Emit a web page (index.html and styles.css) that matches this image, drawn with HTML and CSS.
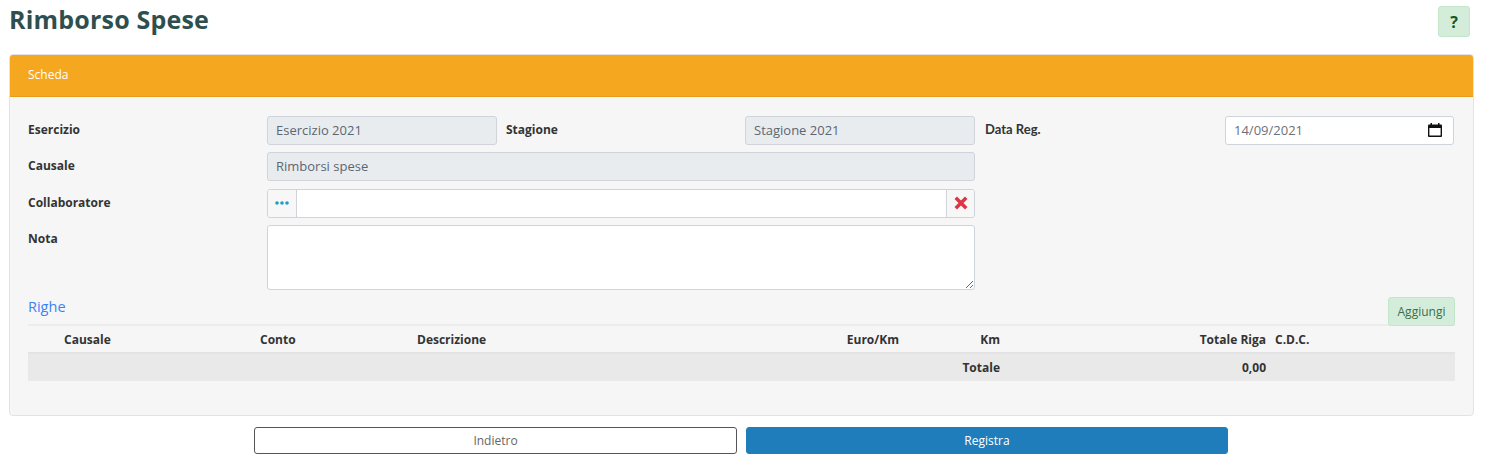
FILE: index.html
```html
<!DOCTYPE html>
<html lang="it">
<head>
<meta charset="utf-8">
<title>Rimborso Spese</title>
<link rel="stylesheet" href="styles.css">
</head>
<body>
<div class="page">
  <header class="top">
    <h1>Rimborso Spese</h1>
    <button class="help" type="button">?</button>
  </header>
  <section class="panel">
    <div class="panel-head">Scheda</div>
    <div class="panel-body">
      <div class="form">
        <label class="lbl">Esercizio</label>
        <div class="field disabled">Esercizio 2021</div>
        <label class="lbl lbl-mid">Stagione</label>
        <div class="field disabled">Stagione 2021</div>
        <label class="lbl lbl-data">Data Reg.</label>
        <div class="field date">
          <span>14/09/2021</span>
          <svg class="cal" viewBox="0 0 14 14" width="14" height="14"><path d="M2.5 0v1.5H1.2C.5 1.5 0 2 0 2.7v10c0 .7.5 1.3 1.2 1.3h11.6c.7 0 1.2-.6 1.2-1.3v-10c0-.7-.5-1.2-1.2-1.2h-1.3V0H10v1.5H4V0zM1.4 5h11.2v7.6H1.4z" fill="#111"/></svg>
        </div>

        <label class="lbl">Causale</label>
        <div class="field disabled span3">Rimborsi spese</div>
        <div class="span2"></div>

        <label class="lbl">Collaboratore</label>
        <div class="lookup span3">
          <span class="addon dots">
            <svg viewBox="0 0 14 4" width="14" height="4"><circle cx="2" cy="2" r="1.8" fill="#1f9dc4"/><circle cx="7" cy="2" r="1.8" fill="#1f9dc4"/><circle cx="12" cy="2" r="1.8" fill="#1f9dc4"/></svg>
          </span>
          <span class="lookup-input"></span>
          <span class="addon x">
            <svg viewBox="0 0 12 12" width="14" height="14"><path d="M1.5 1.5l9 9M10.5 1.5l-9 9" stroke="#dc3545" stroke-width="3" fill="none"/></svg>
          </span>
        </div>
        <div class="span2"></div>

        <label class="lbl">Nota</label>
        <textarea class="note span3"></textarea>
        <div class="span2"></div>
      </div>

      <div class="rows-head">
        <span class="rows-title">Righe</span>
        <button class="add" type="button">Aggiungi</button>
      </div>
      <table class="grid">
        <colgroup>
          <col class="c0"><col class="c1"><col class="c2"><col class="c3"><col class="c4"><col class="c5"><col class="c6"><col class="c7">
        </colgroup>
        <thead>
          <tr>
            <th></th><th>Causale</th><th>Conto</th><th>Descrizione</th>
            <th class="r">Euro/Km</th><th class="r">Km</th><th class="r">Totale Riga</th><th>C.D.C.</th>
          </tr>
        </thead>
        <tfoot>
          <tr>
            <td></td><td></td><td></td><td></td><td></td>
            <td class="r">Totale</td><td class="r">0,00</td><td></td>
          </tr>
        </tfoot>
      </table>
    </div>
  </section>
  <div class="actions">
    <button class="btn back" type="button">Indietro</button>
    <button class="btn save" type="button">Registra</button>
  </div>
</div>
</body>
</html>
```
FILE: styles.css
```css
* { box-sizing: border-box; }
html, body { margin: 0; padding: 0; background: #fff; }
body { font-family: "Open Sans", "Liberation Sans", sans-serif; font-size: 12px; color: #333; }
.page { width: 1465px; margin-left: 9px; }
.top { display: flex; justify-content: space-between; align-items: flex-start; height: 54px; padding-right: 4px; }
.top h1 { margin: 3px 0 0; font-size: 25px; line-height: 32px; font-weight: 700; color: #2f4f4f; letter-spacing: .2px; }
.help { margin-top: 6px; width: 32px; height: 31px; padding: 0; border: 1px solid #c3e6cb; border-radius: 3px; background: #d4edda; color: #155724; font: 700 16px "Open Sans", sans-serif; }
.panel { height: 362px; border: 1px solid #e1e4e6; border-radius: 4px; background: #f6f6f6; overflow: hidden; }
.panel-head { height: 42px; padding: 0 18px; background: #f5a81f; border-bottom: 1px solid #e79c18; color: #fff; font-size: 12px; line-height: 40px; }
.panel-body { padding: 19px 18px 0; }
.form { display: grid; grid-template-columns: 239px 230px 248px 230px 250px 229px; grid-template-rows: 29px 29px 29px 65px; row-gap: 7.25px; }
.lbl { font-size: 12px; font-weight: 700; line-height: 27px; color: #333; }
.form > .lbl-mid { margin-left: 9px; }
.form > .lbl-data { margin-left: 10px; font-family: Lato, sans-serif; font-size: 13px; }
.field { height: 29px; border: 1px solid #ced4da; border-radius: 3px; padding: 0 8px; font-size: 13px; line-height: 26px; color: #5c6670; background: #fff; }
.disabled { background: #e9ecef; }
.span3 { grid-column: span 3; }
.span2 { grid-column: span 2; }
.form .span3 { width: 708px; }
.date { display: flex; align-items: center; justify-content: space-between; padding-right: 11px; padding-bottom: 1px; color: #6b7178; }
.lookup { display: flex; height: 29px; border: 1px solid #ced4da; border-radius: 3px; background: #fff; overflow: hidden; }
.addon { flex: none; display: flex; align-items: center; justify-content: center; background: #f7f7f7; }
.dots { width: 29px; border-right: 1px solid #ced4da; }
.lookup-input { flex: 1; background: #fff; }
.x { width: 28px; border-left: 1px solid #ced4da; }
.form .note { display: block; height: 65px; padding: 6px 8px; border: 1px solid #ced4da; border-radius: 3px; background: #fff; resize: both; font: inherit; }
.rows-head { display: flex; justify-content: space-between; align-items: flex-end; height: 36.25px; border-bottom: 2px solid #ececec; }
.rows-title { align-self: flex-start; margin-top: 6px; font-size: 14.5px; line-height: 22px; color: #3b82f6; }
.add { width: 67px; height: 29px; margin-bottom: -2px; padding: 0; border: 1px solid #c3e6cb; border-radius: 3px; background: #d4edda; color: #3c6e4a; font: 12px "Open Sans", sans-serif; }
.grid { width: 1427px; border-collapse: collapse; table-layout: fixed; }
.c0 { width: 31.5px; } .c1 { width: 196px; } .c2 { width: 157px; } .c3 { width: 387.5px; }
.c4 { width: 103.5px; } .c5 { width: 101px; } .c6 { width: 266px; } .c7 { width: 184.5px; }
.grid th, .grid td { padding: 0 4.5px; text-align: left; font-size: 12px; font-weight: 700; color: #333; white-space: nowrap; }
.grid th { height: 27px; border-bottom: 2px solid #e3e3e3; }
.grid td { height: 28px; background: #e9e9e9; }
.grid .r { text-align: right; }
.actions { display: flex; gap: 9px; margin: 11px 0 0 245px; }
.btn { width: 483px; height: 27px; padding: 0; border-radius: 3px; font: 12px "Open Sans", sans-serif; }
.back { background: #fff; border: 1px solid #555; color: #666; }
.save { width: 482px; background: #1f7dbb; border: 1px solid #1f7dbb; color: #fff; }
```
